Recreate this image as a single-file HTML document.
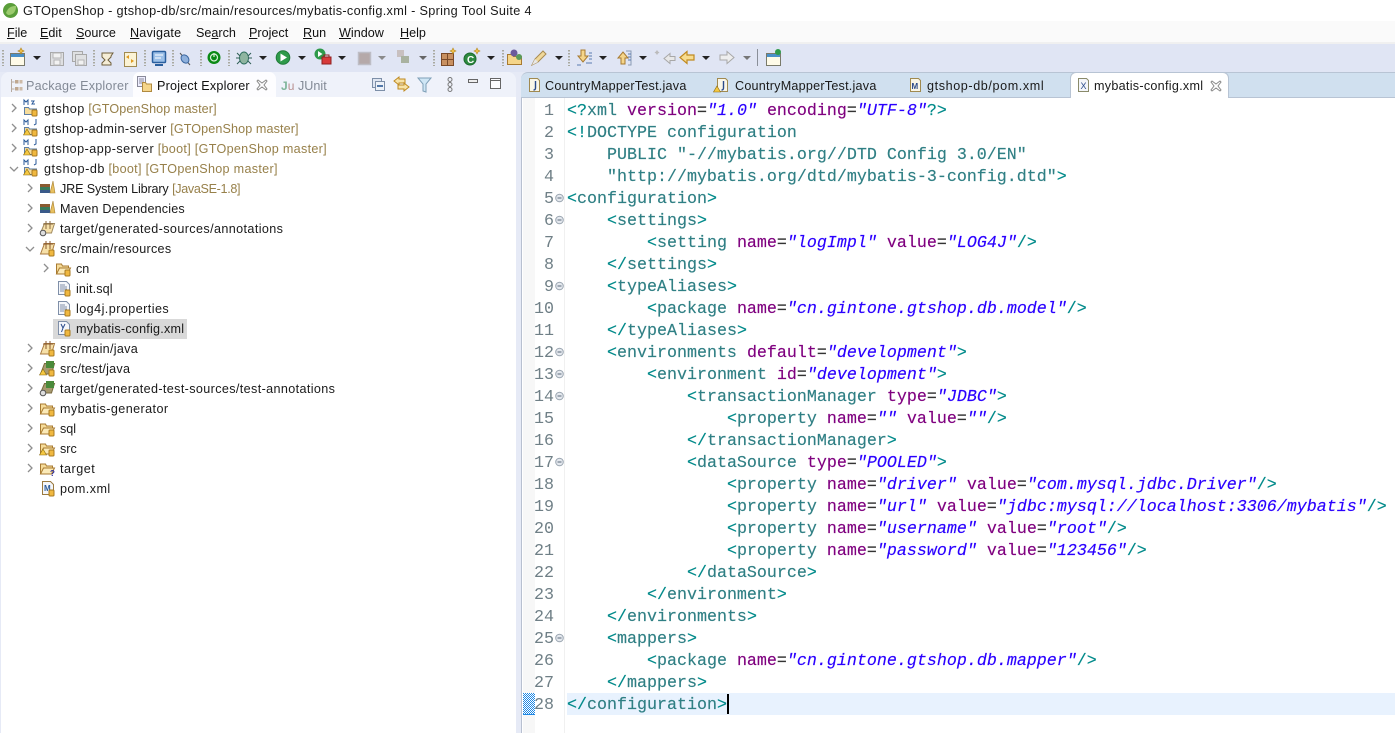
<!DOCTYPE html>
<html><head><meta charset="utf-8"><style>
html,body{margin:0;padding:0;width:1395px;height:733px;overflow:hidden;background:#fff}
body{position:relative;font-family:"Liberation Sans","DejaVu Sans",sans-serif;font-size:12.6px;color:#1a1a1a}
.a{position:absolute}
.t{position:absolute;white-space:nowrap;line-height:20px;height:20px}
.g{color:#97804a;letter-spacing:.1px}
.g3{color:#97804a;letter-spacing:.3px}
.c{position:absolute;left:567px;white-space:pre;height:22px;line-height:22px;font-family:"Liberation Mono","DejaVu Sans Mono",monospace;font-size:16.67px;color:#2f7f84;-webkit-text-stroke:.15px}
.n{position:absolute;left:525px;width:29px;text-align:right;height:22px;line-height:22px;font-family:"Liberation Mono",monospace;font-size:16.67px;color:#6f7f86}
.c b{font-weight:normal;color:#7f007f}
.c i{color:#2a00ff}
.c u{text-decoration:none;color:#333}
.c s{text-decoration:none;color:#008a8a}
.m{position:absolute;top:23px;height:20px;line-height:20px;white-space:nowrap;color:#111}
.m span{text-decoration:underline}
svg{position:absolute;overflow:visible}
.tb{position:absolute;top:50px;width:2px;height:16px;background-image:linear-gradient(#a9a9a0 50%,transparent 50%);background-size:2px 3px}
</style></head><body>

<!-- title bar -->
<svg style="left:2px;top:2px" width="17" height="17" viewBox="0 0 17 17"><circle cx="8.500" cy="8.500" r="7.500" fill="#5a9e3a"/><path d="M4 11C6 5 10 4 14 4c0 5-2 9-8 9z" fill="#9ccb6e"/></svg>
<div class="t" style="left:23px;top:1px;font-size:12.7px;letter-spacing:.32px">GTOpenShop - gtshop-db/src/main/resources/mybatis-config.xml - Spring Tool Suite 4</div>

<!-- menu -->
<div class="a" style="left:0;top:21px;width:1395px;height:21px;background:#fafafa"></div>
<div class="m" style="left:7px"><span>F</span>ile</div>
<div class="m" style="left:40px"><span>E</span>dit</div>
<div class="m" style="left:76px"><span>S</span>ource</div>
<div class="m" style="left:130px;letter-spacing:.2px"><span>N</span>avigate</div>
<div class="m" style="left:196px">Se<span>a</span>rch</div>
<div class="m" style="left:249px"><span>P</span>roject</div>
<div class="m" style="left:303px"><span>R</span>un</div>
<div class="m" style="left:339px"><span>W</span>indow</div>
<div class="m" style="left:400px"><span>H</span>elp</div>

<!-- toolbar -->
<div class="a" style="left:0;top:42px;width:1395px;height:30px;background:#e0e5f4"></div>
<div class="a" style="left:0;top:42px;width:1395px;height:2px;background:#f0f0f0"></div>
<div class="tb" style="left:2px"></div><div class="tb" style="left:93px"></div><div class="tb" style="left:144px"></div><div class="tb" style="left:172px"></div><div class="tb" style="left:200px"></div><div class="tb" style="left:228px"></div><div class="tb" style="left:433px"></div><div class="tb" style="left:502px"></div><div class="tb" style="left:568px"></div>
<div class="a" style="left:757px;top:49px;width:1px;height:17px;background:#8a8f99"></div>

<svg style="left:0;top:42px" width="800" height="30" viewBox="0 0 800 30">
<rect x="10.500" y="11.500" width="14" height="12" fill="#fffbe8" stroke="#7a7a6a"/><rect x="11" y="12" width="13" height="3" fill="#4a90c8"/><path d="M21 6l1 2 2 1-2 1-1 2-1-2-2-1 2-1z" fill="#f2c14e" stroke="#b58a20" stroke-width=".7"/>
<path d="M33 14h8l-4 4z" fill="#222"/>
<rect x="50.500" y="10.500" width="13" height="13" fill="#dfe0e2" stroke="#a8a8a8"/><rect x="53" y="11" width="8" height="5" fill="#f2f2f2" stroke="#b5b5b5"/><rect x="54" y="18" width="6" height="5" fill="#f2f2f2" stroke="#b5b5b5"/>
<rect x="72.500" y="9.500" width="10" height="10" fill="#dfe0e2" stroke="#a8a8a8"/><rect x="75.500" y="12.500" width="11" height="11" fill="#dfe0e2" stroke="#a8a8a8"/><rect x="78" y="18" width="6" height="5" fill="#f2f2f2" stroke="#b5b5b5"/>
<path d="M102 11h11l-2 3v1l-3 3 3 3v2h-9v-2l3-3-3-3z" fill="#f5edd6" stroke="#6f5f3c"/>
<rect x="124.500" y="10.500" width="12" height="14" fill="#fbf3d5" stroke="#a08a50"/><path d="M126 15l3-2v4zM134 19l-3 2v-4z" fill="#e09a20"/>
<rect x="152.500" y="9.500" width="13" height="11" rx="1" fill="#9cc0e8" stroke="#2a5f9e" stroke-width="1.500"/><path d="M155 13h8M155 16h6" stroke="#fff"/><path d="M155 23h8" stroke="#2a5f9e" stroke-width="2"/>
<path d="M180 11l10 12" stroke="#555"/><ellipse cx="185" cy="17" rx="3.500" ry="4.500" transform="rotate(-40 185 17)" fill="#8eb0dc" stroke="#3a66a0"/>
<circle cx="214" cy="15.500" r="6.500" fill="#0b8a15"/><circle cx="214" cy="15.500" r="3.500" fill="none" stroke="#d8f0d8" stroke-width="1.200"/><path d="M214 11v4" stroke="#d8f0d8" stroke-width="1.200"/>
<ellipse cx="244" cy="16" rx="4.500" ry="6" fill="#8fb5a0" stroke="#2f6f5f"/><path d="M237 11l3 3M251 11l-3 3M236 16h4M252 16h-4M237 22l3-3M251 22l-3-3" stroke="#2f5f55"/>
<path d="M259 14h8l-4 4z" fill="#222"/>
<circle cx="283" cy="15.500" r="6.800" fill="#2e9a4a" stroke="#1f7a38"/><path d="M280.500 11.500l6.500 4-6.500 4z" fill="#fff"/>
<path d="M298 14h8l-4 4z" fill="#222"/>
<circle cx="320" cy="12" r="5.500" fill="#2e9a4a"/><path d="M318 9l4.500 3-4.500 3z" fill="#fff"/><rect x="322" y="15" width="9" height="7" fill="#d83a3a" stroke="#902020"/><path d="M324 15v-2h5v2" fill="none" stroke="#902020"/>
<path d="M338 14h8l-4 4z" fill="#222"/>
<rect x="358.500" y="10.500" width="12" height="12" fill="#b5a9a9" stroke="#bdbdc5" stroke-width="1.500"/>
<path d="M378 14h8l-4 4z" fill="#8a8a8a"/>
<rect x="397" y="8" width="7" height="7" fill="#c8c0c0"/><rect x="401" y="14" width="8" height="7" fill="#a9b2a0"/>
<path d="M419 14h8l-4 4z" fill="#666"/>
<rect x="441.500" y="11.500" width="12" height="12" fill="#c89060" stroke="#7a4a28"/><path d="M447.500 11v12M441 17.500h12" stroke="#7a4a28"/><path d="M453 6l1 2 2 1-2 1-1 2-1-2-2-1 2-1z" fill="#f2c14e" stroke="#b58a20" stroke-width=".6"/>
<circle cx="470" cy="17" r="6" fill="#2e8a40" stroke="#1c6a2c"/><text x="467" y="21" font-size="10" font-weight="bold" fill="#fff" font-family="Liberation Sans">C</text><path d="M477 6l1 2 2 1-2 1-1 2-1-2-2-1 2-1z" fill="#f2c14e" stroke="#b58a20" stroke-width=".6"/>
<path d="M487 14h8l-4 4z" fill="#222"/>
<path d="M507.500 22.500v-10h5l1 2h8v8z" fill="#f5d58a" stroke="#a87a30"/><circle cx="514" cy="11" r="3.500" fill="#6a5a9c"/><circle cx="519" cy="15" r="3" fill="#5a9a5a"/>
<path d="M532 23l3-6 8-8 3 3-8 8z" fill="#f0d89a" stroke="#a88a50"/><path d="M532 23l3-6 3 3z" fill="#e8e8e8"/>
<path d="M555 14h8l-4 4z" fill="#222"/>
<path d="M581 8h4v6h3l-5 6-5-6h3z" fill="#f5d58a" stroke="#a87a30"/><path d="M589 11h3M589 14h3M589 17h3M586 21h6M577 23h4" stroke="#5a7ab0"/>
<path d="M599 14h8l-4 4z" fill="#222"/>
<path d="M621 22h4v-6h3l-5-6-5 6h3z" fill="#f5d58a" stroke="#a87a30"/><path d="M626 9h5v14h-3" fill="none" stroke="#8a9ab5"/><path d="M628 12h3M628 15h3M628 18h3" stroke="#5a7ab0"/>
<path d="M639 14h8l-4 4z" fill="#222"/>
<path d="M670 11.500l-6 5 6 5v-3h5v-4h-5z" fill="#e8e8e8" stroke="#a8a8a8"/><path d="M657 8l1 1.500 1.500 1-1.500 1-1 1.500-1-1.500-1.500-1 1.500-1z" fill="#bbb"/>
<path d="M687 9.500l-7 6 7 6v-3.500h7v-5h-7z" fill="#f7dc8f" stroke="#c08a20" stroke-width="1.200"/>
<path d="M702 14h8l-4 4z" fill="#222"/>
<path d="M727 9.500l7 6-7 6v-3.500h-7v-5h7z" fill="#eee" stroke="#a8a8a8"/>
<path d="M743 14h8l-4 4z" fill="#777"/>
<rect x="766.500" y="11.500" width="14" height="12" fill="#fffbe8" stroke="#7a7a6a"/><rect x="767" y="12" width="13" height="3" fill="#4a90c8"/><circle cx="778" cy="10" r="3" fill="#2e9a4a"/>
</svg>

<!-- left view tabs -->
<div class="a" style="left:0;top:72px;width:1395px;height:661px;background:#e6eaf6"></div>
<div class="a" style="left:1px;top:72px;width:515px;height:25px;background:#eff2fa;border-radius:8px 8px 0 0"></div>
<div class="a" style="left:133px;top:72px;width:143px;height:25px;background:#fdfdff;border-radius:7px 7px 0 0"></div>
<div class="a" style="left:1px;top:97px;width:515px;height:636px;background:#fff"></div>
<svg style="left:9px;top:78px" width="15" height="15" viewBox="0 0 15 15"><path d="M2.500 1v13M2.500 4h3M2.500 11h3" stroke="#b7aaa0" fill="none"/><rect x="6" y="2" width="3.500" height="3.500" fill="#bfa890"/><rect x="6" y="9" width="3.500" height="3.500" fill="#bfa890"/><rect x="10.500" y="2" width="3" height="3.500" fill="#cdbba8"/><rect x="10.500" y="9" width="3" height="3.500" fill="#cdbba8"/></svg>
<div class="t" style="left:26px;top:76px;color:#838a96;letter-spacing:.2px">Package Explorer</div>
<svg style="left:137px;top:76px" width="16" height="17" viewBox="0 0 16 17"><rect x=".5" y=".5" width="8" height="10" fill="#eef" stroke="#8a8a9a"/><path d="M2 3h5M2 5h5M2 7h4" stroke="#8a8a9a"/><path d="M5.500 15.500v-9h3l1 1.500h5v7.500z" fill="#f5d58a" stroke="#b08a40"/></svg>
<div class="t" style="left:157px;top:76px;color:#111;letter-spacing:.2px">Project Explorer</div>
<svg style="left:256px;top:79px" width="12" height="12" viewBox="0 0 12 12"><path d="M2 1l4 3 4-3 1 1-3 4 3 4-1 1-4-3-4 3-1-1 3-4-3-4z" fill="none" stroke="#8a8a8a"/></svg>
<div class="t" style="left:281px;top:76px;color:#8fa8a0;font-size:12px"><span style="color:#7fb59a;font-weight:bold">J</span><span style="color:#b89090">u</span></div>
<div class="t" style="left:298px;top:76px;color:#838a96">JUnit</div>
<svg style="left:370px;top:76px" width="145" height="18" viewBox="0 0 145 18">
<rect x="2.500" y="2.500" width="9" height="9" fill="#dfe6f2" stroke="#7d8fa8"/><rect x="5.500" y="5.500" width="9" height="9" fill="#eef2f8" stroke="#7d8fa8"/><path d="M7 10h6" stroke="#1f4f8f" stroke-width="1.500"/>
<path d="M24 5l5-4v2h6v4h-6v2z" fill="#f7e3a8" stroke="#bf8a20"/><path d="M39 11l-5-4v2h-6v4h6v2z" fill="#f7e3a8" stroke="#bf8a20"/>
<path d="M48 2h13l-5 6v8l-3-1v-7z" fill="#cfe6f5" stroke="#7fa0b8"/>
<circle cx="80" cy="3.500" r="2" fill="none" stroke="#777"/><circle cx="80" cy="8.500" r="2" fill="none" stroke="#777"/><circle cx="80" cy="13.500" r="2" fill="none" stroke="#777"/>
<rect x="98.500" y="3.500" width="9" height="3" fill="#eee" stroke="#666"/>
<rect x="120.500" y="2.500" width="10" height="10" fill="#fdfdff" stroke="#666"/><path d="M120 4.500h11" stroke="#666"/>
</svg>

<!-- tree -->
<svg style="left:0;top:97px" width="70" height="410" viewBox="0 0 70 410" fill="none">
<g stroke="#8f8f8f" stroke-width="1.300">
<path d="M12 7l4 4-4 4M12 27l4 4-4 4M12 47l4 4-4 4M10 70l4 4 4-4"/>
<path d="M28 87l4 4-4 4M28 107l4 4-4 4M28 127l4 4-4 4M26 150l4 4 4-4"/>
<path d="M44 167l4 4-4 4"/>
<path d="M28 247l4 4-4 4M28 267l4 4-4 4M28 287l4 4-4 4M28 307l4 4-4 4M28 327l4 4-4 4M28 347l4 4-4 4M28 367l4 4-4 4"/>
</g>
<g><path d="M24.500 17.500v-7h4l1 1.500h7v5.500z" fill="#f6dc9a" stroke="#5f7fa5"/><path d="M24 8V3l2 2 2-2v5M31 4h3l-2 3h3" stroke="#2a5a9a"/><rect x="32" y="13" width="5" height="6" rx="1" fill="#f0b840" stroke="#a87a20"/></g>
<g transform="translate(0 20)"><path d="M24.500 17.500v-7h4l1 1.500h7v5.500z" fill="#f6dc9a" stroke="#5f7fa5"/><path d="M24 8V3l2 2 2-2v5M36 2v5l-2 1" stroke="#2a5a9a"/><rect x="32" y="13" width="5" height="6" rx="1" fill="#f0b840" stroke="#a87a20"/><path d="M27 12l3.500 6h-7z" fill="#f5c842" stroke="#8a6a10" stroke-width=".6"/></g>
<g transform="translate(0 40)"><path d="M24.500 17.500v-7h4l1 1.500h7v5.500z" fill="#f6dc9a" stroke="#5f7fa5"/><path d="M24 8V3l2 2 2-2v5M36 2v5l-2 1" stroke="#2a5a9a"/><rect x="32" y="13" width="5" height="6" rx="1" fill="#f0b840" stroke="#a87a20"/><path d="M27 12l3.500 6h-7z" fill="#f5c842" stroke="#8a6a10" stroke-width=".6"/></g>
<g transform="translate(0 60)"><path d="M24.500 17.500v-7h4l1 1.500h7v5.500z" fill="#f6dc9a" stroke="#5f7fa5"/><path d="M24 8V3l2 2 2-2v5M36 2v5l-2 1" stroke="#2a5a9a"/><rect x="32" y="13" width="5" height="6" rx="1" fill="#f0b840" stroke="#a87a20"/><path d="M27 12l3.500 6h-7z" fill="#f5c842" stroke="#8a6a10" stroke-width=".6"/></g>
<g transform="translate(0 80)"><rect x="40" y="7" width="10" height="3" fill="#8a5a30"/><rect x="40" y="10" width="10" height="3" fill="#3a7a5a"/><rect x="40" y="13" width="10" height="3" fill="#3a5a8a"/><path d="M50 16l3-12 2 12z" fill="#e8c060" stroke="#a88030" stroke-width=".6"/></g>
<g transform="translate(0 100)"><rect x="40" y="7" width="10" height="3" fill="#8a5a30"/><rect x="40" y="10" width="10" height="3" fill="#3a7a5a"/><rect x="40" y="13" width="10" height="3" fill="#3a5a8a"/><path d="M50 16l3-12 2 12z" fill="#e8c060" stroke="#a88030" stroke-width=".6"/></g>
<g transform="translate(0 120)"><path d="M40.500 16l4-9.500h10l-3 9.500z" fill="#f6e0a8" stroke="#a08a60"/><path d="M46 4v8M50 4v8M43 7h10" stroke="#8a6a40"/><circle cx="43" cy="16" r="2.800" fill="#ddd" stroke="#555"/></g>
<g transform="translate(0 140)"><path d="M40.500 17l4-10.500h10l-3 10.500z" fill="#f6e0a8" stroke="#a87a40"/><path d="M46 4v8M50 4v8M43 7h10" stroke="#8a5a30"/><rect x="49" y="13" width="5" height="6" rx="1" fill="#f0b840" stroke="#a87a20"/></g>
<g transform="translate(0 160)"><path d="M56.500 17V7h5l1 2h6v2" fill="#f6dc9a" stroke="#a87a30"/><path d="M56.500 17l3-6h11l-3 6z" fill="#fbeab8" stroke="#a87a30"/><rect x="65" y="13" width="5" height="6" rx="1" fill="#f0b840" stroke="#a87a20"/></g>
<g transform="translate(0 180)"><path d="M58.500 4.500h8l3 3v10h-11z" fill="#f4f6fa" stroke="#7f8fa8"/><path d="M60 8h5M60 10h7M60 12h7M60 14h4" stroke="#7f8fa8"/><rect x="65" y="13" width="5" height="6" rx="1" fill="#f0b840" stroke="#a87a20"/></g>
<g transform="translate(0 200)"><path d="M58.500 4.500h8l3 3v10h-11z" fill="#f4f6fa" stroke="#7f8fa8"/><path d="M60 8h5M60 10h7M60 12h7M60 14h4" stroke="#7f8fa8"/><rect x="65" y="13" width="5" height="6" rx="1" fill="#f0b840" stroke="#a87a20"/></g>
</svg>
<div class="a" style="left:53px;top:319px;width:134px;height:20px;background:#d9d9d9"></div>
<svg style="left:0;top:97px" width="70" height="410" viewBox="0 0 70 410" fill="none">
<g transform="translate(0 220)"><path d="M58.500 4.500h8l3 3v10h-11z" fill="#f4f6fa" stroke="#7f8fa8"/><path d="M61 7l2 4 2-4M63 11l-1.500 4" stroke="#2a4a8a"/><rect x="65" y="13" width="5" height="6" rx="1" fill="#f0b840" stroke="#a87a20"/></g>
<g transform="translate(0 240)"><path d="M40.500 17l4-10.500h10l-3 10.500z" fill="#f6e0a8" stroke="#a87a40"/><path d="M46 4v8M50 4v8M43 7h10" stroke="#8a5a30"/><rect x="49" y="13" width="5" height="6" rx="1" fill="#f0b840" stroke="#a87a20"/></g>
<g transform="translate(0 260)"><path d="M40.500 17l4-10.500h10l-3 10.500z" fill="#a89a70" stroke="#7a6a40"/><rect x="46" y="4" width="8" height="7" fill="#4a8a3a"/><rect x="49" y="13" width="5" height="6" rx="1" fill="#f0b840" stroke="#a87a20"/><path d="M43 12l3.500 6h-7z" fill="#f5c842" stroke="#8a6a10" stroke-width=".6"/></g>
<g transform="translate(0 280)"><path d="M40.500 16l4-9.500h10l-3 9.500z" fill="#a89a70" stroke="#7a6a40"/><rect x="46" y="4" width="8" height="7" fill="#4a8a3a"/><circle cx="43" cy="16" r="2.800" fill="#ddd" stroke="#555"/></g>
<g transform="translate(0 300)"><path d="M40.500 17V7h5l1 2h6v2" fill="#f6dc9a" stroke="#a87a30"/><path d="M40.500 17l3-6h11l-3 6z" fill="#fbeab8" stroke="#a87a30"/><rect x="49" y="13" width="5" height="6" rx="1" fill="#f0b840" stroke="#a87a20"/></g>
<g transform="translate(0 320)"><path d="M40.500 17V7h5l1 2h6v2" fill="#f6dc9a" stroke="#a87a30"/><path d="M40.500 17l3-6h11l-3 6z" fill="#fbeab8" stroke="#a87a30"/><rect x="49" y="13" width="5" height="6" rx="1" fill="#f0b840" stroke="#a87a20"/></g>
<g transform="translate(0 340)"><path d="M40.500 17V7h5l1 2h6v2" fill="#f6dc9a" stroke="#a87a30"/><path d="M40.500 17l3-6h11l-3 6z" fill="#fbeab8" stroke="#a87a30"/><rect x="49" y="13" width="5" height="6" rx="1" fill="#f0b840" stroke="#a87a20"/><path d="M43 12l3.500 6h-7z" fill="#f5c842" stroke="#8a6a10" stroke-width=".6"/></g>
<g transform="translate(0 360)"><path d="M40.500 17V7h5l1 2h6v2" fill="#f6dc9a" stroke="#a87a30"/><path d="M40.500 17l3-6h11l-3 6z" fill="#fbeab8" stroke="#a87a30"/><text x="50" y="19" font-size="8" font-weight="bold" fill="#2a2a9a" font-family="Liberation Sans">?</text></g>
<g transform="translate(0 380)"><path d="M42.500 4.500h8l3 3v10h-11z" fill="#f4f6fa" stroke="#9a7a40"/><text x="44" y="14" font-size="8" font-weight="bold" fill="#2a5a9a" font-family="Liberation Sans">M</text><rect x="49" y="13" width="5" height="6" rx="1" fill="#f0b840" stroke="#a87a20"/></g>
</svg>

<div class="t" style="left:44px;top:99px"><span style="letter-spacing:.5px">gtshop</span> <span class="g">[GTOpenShop master]</span></div>
<div class="t" style="left:44px;top:119px"><span style="letter-spacing:.38px">gtshop-admin-server</span> <span class="g">[GTOpenShop master]</span></div>
<div class="t" style="left:44px;top:139px"><span style="letter-spacing:.47px">gtshop-app-server</span> <span class="g3">[boot] [GTOpenShop master]</span></div>
<div class="t" style="left:44px;top:159px"><span style="letter-spacing:.55px">gtshop-db</span> <span class="g3">[boot] [GTOpenShop master]</span></div>
<div class="t" style="left:60px;top:179px"><span style="letter-spacing:-.15px">JRE System Library</span> <span class="g" style="letter-spacing:-.33px">[JavaSE-1.8]</span></div>
<div class="t" style="left:60px;top:199px;letter-spacing:.17px">Maven Dependencies</div>
<div class="t" style="left:60px;top:219px;letter-spacing:.39px">target/generated-sources/annotations</div>
<div class="t" style="left:60px;top:239px;letter-spacing:.28px">src/main/resources</div>
<div class="t" style="left:76px;top:259px">cn</div>
<div class="t" style="left:76px;top:279px;letter-spacing:.12px">init.sql</div>
<div class="t" style="left:76px;top:299px;letter-spacing:.44px">log4j.properties</div>
<div class="t" style="left:76px;top:319px;letter-spacing:.22px">mybatis-config.xml</div>
<div class="t" style="left:60px;top:339px;letter-spacing:.3px">src/main/java</div>
<div class="t" style="left:60px;top:359px;letter-spacing:.23px">src/test/java</div>
<div class="t" style="left:60px;top:379px;letter-spacing:.37px">target/generated-test-sources/test-annotations</div>
<div class="t" style="left:60px;top:399px;letter-spacing:.41px">mybatis-generator</div>
<div class="t" style="left:60px;top:419px">sql</div>
<div class="t" style="left:60px;top:439px">src</div>
<div class="t" style="left:60px;top:459px;letter-spacing:.5px">target</div>
<div class="t" style="left:60px;top:479px;letter-spacing:.43px">pom.xml</div>

<!-- editor -->
<div class="a" style="left:521px;top:72px;width:874px;height:25px;background:#d0e0ef;border-radius:7px 0 0 0;border-top:1px solid #b8c4d4;box-sizing:border-box"></div>
<div class="a" style="left:521px;top:97px;width:874px;height:636px;background:#fff;border-left:1px solid #b8c0d0;box-sizing:border-box"></div>
<div class="a" style="left:523px;top:97px;width:12px;height:636px;background:#f7f7f7"></div>
<div class="a" style="left:564px;top:97px;width:1px;height:636px;background:#f0f0f0"></div>
<div class="a" style="left:1070px;top:72px;width:159px;height:26px;background:#fff;border:1px solid #b8c4d4;border-bottom:0;border-radius:6px 6px 0 0;box-sizing:border-box"></div>
<div class="a" style="left:521px;top:97px;width:549px;height:1px;background:#b8c4d4"></div>
<div class="a" style="left:1229px;top:97px;width:166px;height:1px;background:#b8c4d4"></div>

<svg style="left:528px;top:77px" width="700" height="16" viewBox="0 0 700 16" fill="none">
<path d="M1.500 1.500h8l2 2v11h-10z" fill="#f9f6e8" stroke="#a08a50"/><path d="M7.500 4v7q0 2-2 2" stroke="#2a4a8a" stroke-width="1.400"/>
<path d="M189.500 1.500h8l2 2v11h-10z" fill="#f9f6e8" stroke="#a08a50"/><path d="M195.500 4v7q0 2-2 2" stroke="#2a4a8a" stroke-width="1.400"/><path d="M189 9l3.500 6h-7z" fill="#f5c842" stroke="#8a6a10" stroke-width=".6"/>
<path d="M382.500 1.500h8l2 2v11h-10z" fill="#f9f6e8" stroke="#a08a50"/><text x="383.500" y="12" font-size="8" font-weight="bold" fill="#2a4a8a" font-family="Liberation Sans">M</text>
<path d="M550.500 1.500h8l2 2v11h-10z" fill="#f4f6fa" stroke="#8a8a6a"/><text x="552.500" y="12" font-size="9" fill="#2a4a8a" font-family="Liberation Sans">X</text>
<path d="M684 4l4 3 4-3 1 1-3 4 3 4-1 1-4-3-4 3-1-1 3-4-3-4z" stroke="#8a8a8a"/>
</svg>
<div class="t" style="left:545px;top:76px;letter-spacing:.23px">CountryMapperTest.java</div>
<div class="t" style="left:735px;top:76px;letter-spacing:.23px">CountryMapperTest.java</div>
<div class="t" style="left:927px;top:76px;letter-spacing:.6px">gtshop-db/pom.xml</div>
<div class="t" style="left:1094px;top:76px;letter-spacing:.28px">mybatis-config.xml</div>

<div class="a" style="left:567px;top:693px;width:828px;height:22px;background:#e8f2fe"></div>
<svg style="left:523px;top:693px" width="12" height="22" viewBox="0 0 12 22" shape-rendering="crispEdges"><defs><pattern id="d" width="2" height="2" patternUnits="userSpaceOnUse"><rect width="2" height="2" fill="#fff"/><rect width="1" height="1" fill="#1e88e5"/><rect x="1" y="1" width="1" height="1" fill="#1e88e5"/></pattern></defs><rect width="12" height="22" fill="url(#d)"/><rect y="21" width="12" height="1" fill="#1e88e5"/></svg>
<div class="a" style="left:727px;top:694px;width:2px;height:20px;background:#000"></div>

<div class="n" style="top:101px">1</div><div class="n" style="top:123px">2</div><div class="n" style="top:145px">3</div><div class="n" style="top:167px">4</div><div class="n" style="top:189px">5</div><div class="n" style="top:211px">6</div><div class="n" style="top:233px">7</div><div class="n" style="top:255px">8</div><div class="n" style="top:277px">9</div><div class="n" style="top:299px">10</div><div class="n" style="top:321px">11</div><div class="n" style="top:343px">12</div><div class="n" style="top:365px">13</div><div class="n" style="top:387px">14</div><div class="n" style="top:409px">15</div><div class="n" style="top:431px">16</div><div class="n" style="top:453px">17</div><div class="n" style="top:475px">18</div><div class="n" style="top:497px">19</div><div class="n" style="top:519px">20</div><div class="n" style="top:541px">21</div><div class="n" style="top:563px">22</div><div class="n" style="top:585px">23</div><div class="n" style="top:607px">24</div><div class="n" style="top:629px">25</div><div class="n" style="top:651px">26</div><div class="n" style="top:673px">27</div><div class="n" style="top:695px">28</div>

<svg style="left:554px;top:100px" width="11" height="560" viewBox="0 0 11 560" fill="none">
<g fill="#e4e8ee" stroke="#9aa5b0"><circle cx="5.500" cy="98" r="3.800"/><circle cx="5.500" cy="120" r="3.800"/><circle cx="5.500" cy="186" r="3.800"/><circle cx="5.500" cy="252" r="3.800"/><circle cx="5.500" cy="274" r="3.800"/><circle cx="5.500" cy="296" r="3.800"/><circle cx="5.500" cy="362" r="3.800"/><circle cx="5.500" cy="538" r="3.800"/></g>
<path d="M3.500 98h4M3.500 120h4M3.500 186h4M3.500 252h4M3.500 274h4M3.500 296h4M3.500 362h4M3.500 538h4" stroke="#5a6a7a"/>
</svg>

<div class="c" style="top:101px"><s>&lt;?</s>xml <b>version</b><u>=</u><i>"1.0"</i> <b>encoding</b><u>=</u><i>"UTF-8"</i><s>?&gt;</s></div>
<div class="c" style="top:123px"><s>&lt;!</s>DOCTYPE configuration</div>
<div class="c" style="top:145px">    PUBLIC "-//mybatis.org//DTD Config 3.0/EN"</div>
<div class="c" style="top:167px">    "http://mybatis.org/dtd/mybatis-3-config.dtd"<s>&gt;</s></div>
<div class="c" style="top:189px"><s>&lt;</s>configuration<s>&gt;</s></div>
<div class="c" style="top:211px">    <s>&lt;</s>settings<s>&gt;</s></div>
<div class="c" style="top:233px">        <s>&lt;</s>setting <b>name</b><u>=</u><i>"logImpl"</i> <b>value</b><u>=</u><i>"LOG4J"</i><s>/&gt;</s></div>
<div class="c" style="top:255px">    <s>&lt;/</s>settings<s>&gt;</s></div>
<div class="c" style="top:277px">    <s>&lt;</s>typeAliases<s>&gt;</s></div>
<div class="c" style="top:299px">        <s>&lt;</s>package <b>name</b><u>=</u><i>"cn.gintone.gtshop.db.model"</i><s>/&gt;</s></div>
<div class="c" style="top:321px">    <s>&lt;/</s>typeAliases<s>&gt;</s></div>
<div class="c" style="top:343px">    <s>&lt;</s>environments <b>default</b><u>=</u><i>"development"</i><s>&gt;</s></div>
<div class="c" style="top:365px">        <s>&lt;</s>environment <b>id</b><u>=</u><i>"development"</i><s>&gt;</s></div>
<div class="c" style="top:387px">            <s>&lt;</s>transactionManager <b>type</b><u>=</u><i>"JDBC"</i><s>&gt;</s></div>
<div class="c" style="top:409px">                <s>&lt;</s>property <b>name</b><u>=</u><i>""</i> <b>value</b><u>=</u><i>""</i><s>/&gt;</s></div>
<div class="c" style="top:431px">            <s>&lt;/</s>transactionManager<s>&gt;</s></div>
<div class="c" style="top:453px">            <s>&lt;</s>dataSource <b>type</b><u>=</u><i>"POOLED"</i><s>&gt;</s></div>
<div class="c" style="top:475px">                <s>&lt;</s>property <b>name</b><u>=</u><i>"driver"</i> <b>value</b><u>=</u><i>"com.mysql.jdbc.Driver"</i><s>/&gt;</s></div>
<div class="c" style="top:497px">                <s>&lt;</s>property <b>name</b><u>=</u><i>"url"</i> <b>value</b><u>=</u><i>"jdbc:mysql://localhost:3306/mybatis"</i><s>/&gt;</s></div>
<div class="c" style="top:519px">                <s>&lt;</s>property <b>name</b><u>=</u><i>"username"</i> <b>value</b><u>=</u><i>"root"</i><s>/&gt;</s></div>
<div class="c" style="top:541px">                <s>&lt;</s>property <b>name</b><u>=</u><i>"password"</i> <b>value</b><u>=</u><i>"123456"</i><s>/&gt;</s></div>
<div class="c" style="top:563px">            <s>&lt;/</s>dataSource<s>&gt;</s></div>
<div class="c" style="top:585px">        <s>&lt;/</s>environment<s>&gt;</s></div>
<div class="c" style="top:607px">    <s>&lt;/</s>environments<s>&gt;</s></div>
<div class="c" style="top:629px">    <s>&lt;</s>mappers<s>&gt;</s></div>
<div class="c" style="top:651px">        <s>&lt;</s>package <b>name</b><u>=</u><i>"cn.gintone.gtshop.db.mapper"</i><s>/&gt;</s></div>
<div class="c" style="top:673px">    <s>&lt;/</s>mappers<s>&gt;</s></div>
<div class="c" style="top:695px"><s>&lt;/</s>configuration<s>&gt;</s></div>
</body></html>
